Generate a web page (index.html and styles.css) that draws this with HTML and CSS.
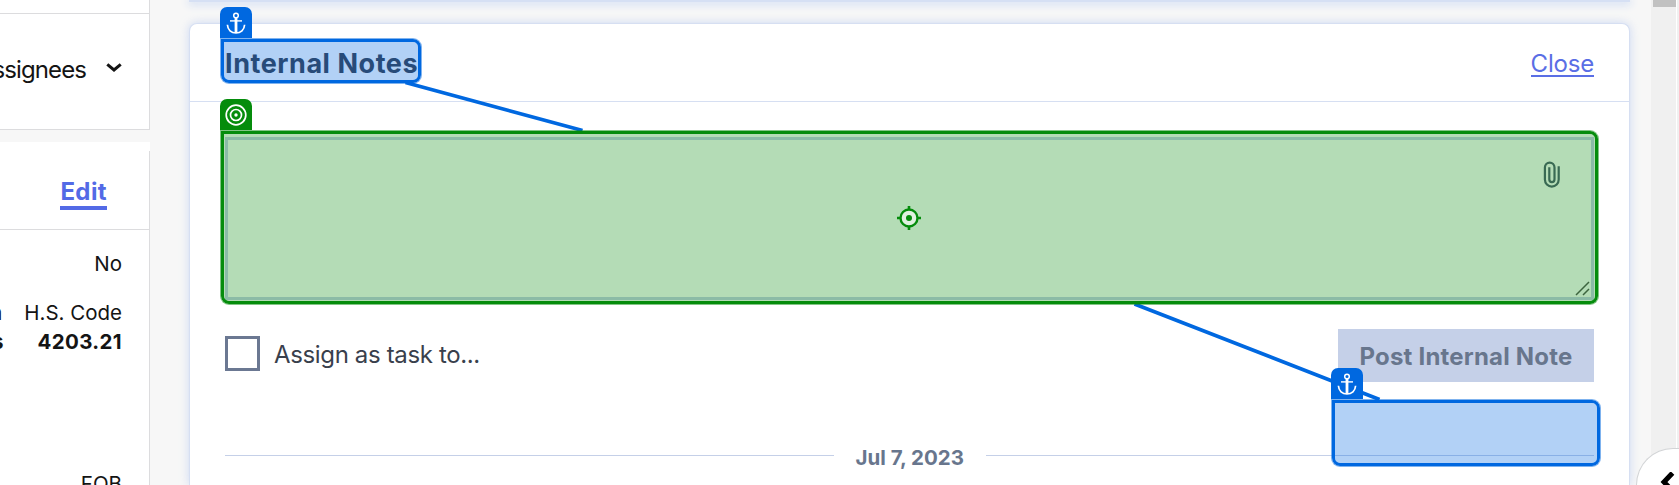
FILE: index.html
```
<!DOCTYPE html>
<html lang="en">
<head>
<meta charset="utf-8">
<title>Internal Notes</title>
<link rel="stylesheet" href="styles.css">
</head>
<body>
<svg class="defs" width="0" height="0">
  <symbol id="anchor" viewBox="0 0 20 22">
    <g fill="none" stroke="#fff">
      <circle cx="10" cy="3.5" r="2.3" stroke-width="1.5"/>
      <path d="M10 5.8V21" stroke-width="2.8"/>
      <path d="M4 8.9H16" stroke-width="1.4"/>
      <path d="M1.4 12.8C1.6 17.8 5.4 21 10 21S18.400 17.800 18.600 12.800" stroke-width="1.700"/>
    </g>
  </symbol>
</svg>
<div class="app">
  <aside class="sidebar">
    <section class="filters">
      <span class="assignees">Assignees</span>
      <svg class="chevron" width="16" height="10" viewBox="0 0 16 10"><path d="M1.300 1.300L8 7L14.700 1.300" fill="none" stroke="#141414" stroke-width="3"/></svg>
    </section>
    <section class="details">
      <header class="details-head"><a class="edit">Edit</a></header>
      <div class="row no"><span>No</span></div>
      <div class="row code"><span class="cut">Origin</span><span>H.S. Code</span></div>
      <div class="row value"><span class="cut">States</span><span class="number">4203.21</span></div>
      <div class="row fob"><span>FOB</span></div>
    </section>
  </aside>
  <main class="main">
    <div class="previous"></div>
    <section class="notes">
      <header class="notes-head"><h2>Internal Notes</h2><a class="close">Close</a></header>
      <div class="notes-body">
        <div class="textarea">
          <svg class="clip" width="18" height="28" viewBox="0 0 18 28"><path d="M15.700 5.300V18.500A6.900 7.200 0 0 1 1.900 18.500V6.500A4.800 4.900 0 0 1 11.500 6.500V18.300A2.500 2.800 0 0 1 6.300 18.300V6.200" fill="none" stroke="#4f5c72" stroke-width="2.200"/></svg>
          <svg class="grip" width="15" height="15" viewBox="0 0 15 15"><path d="M1 14L14 1M8 14L14 8" stroke="#555" stroke-width="1.500"/></svg>
        </div>
        <div class="actions">
          <span class="checkbox"></span><span class="task">Assign as task to...</span>
          <span class="post"><span>Post Internal Note</span></span>
        </div>
        <div class="divider"><i></i><span>Jul 7, 2023</span><i></i></div>
      </div>
    </section>
  </main>
  <div class="scrollbar"><div class="thumb"></div></div>
  <div class="edge"></div>
</div>
<svg class="links" width="1679" height="485"><path d="M405.500 82.500L582.500 130.500M1134.500 304L1379.500 399.500" stroke="#0068e0" stroke-width="3.700"/></svg>
<div class="mark blue title-mark"><span class="tab"><svg width="20" height="22"><use href="#anchor"/></svg></span></div>
<div class="mark green area-mark">
  <span class="tab"><svg width="22" height="22" viewBox="0 0 22 22"><g fill="none" stroke="#fff" stroke-width="1.700"><circle cx="11" cy="11" r="9.800"/><circle cx="11" cy="11" r="5.500"/></g><circle cx="11" cy="11" r="1.700" fill="#fff"/></svg></span>
  <svg class="crosshair" width="24" height="24" viewBox="0 0 24 24"><circle cx="12" cy="12" r="8.500" fill="#e0f1e0" stroke="#058c0c" stroke-width="2.400"/><circle cx="12" cy="12" r="3" fill="#058c0c"/><path d="M12 0V4M12 20V24M0 12H4M20 12H24" stroke="#058c0c" stroke-width="2.600"/></svg>
</div>
<div class="mark blue empty-mark"><span class="tab"><svg width="20" height="22"><use href="#anchor"/></svg></span></div>
<div class="bubble"><svg width="16" height="22" viewBox="0 0 16 22"><path d="M13.500 1L5 10L13.500 19" fill="none" stroke="#000" stroke-width="5"/></svg></div>
</body>
</html>
```
FILE: styles.css
```
* { box-sizing: border-box; }
html { overflow: hidden; }
body { margin: 0; width: 1679px; height: 485px; overflow: hidden; position: relative; background: #f7f7f7; font-family: Inter, "Liberation Sans", sans-serif; color: #141414; }
.defs { position: absolute; }
.app { display: flex; height: 485px; overflow: hidden; }
.sidebar { width: 150px; flex: none; display: flex; flex-direction: column; gap: 12px; overflow: hidden; }
.filters { height: 130px; flex: none; padding: 13px 27px 0 0; background: linear-gradient(#dcdcde, #dcdcde) 0 13px / 100% 1px no-repeat #fff; border: solid #dcdcde; border-width: 0 1px 1px 0; display: flex; align-items: center; justify-content: flex-end; gap: 20px; }
.assignees { font-size: 24px; line-height: 30px; letter-spacing: -.9px; margin-top: -2px; }
.chevron { flex: none; margin-top: -7px; }
.details { flex: none; height: 343px; overflow: hidden; background: linear-gradient(#dcdcde, #dcdcde) 100% 9px / 1px 100% no-repeat #fff; }
.details-head { height: 88px; border-bottom: 1px solid #dcdcde; padding: 34px 43px 0 0; display: flex; justify-content: flex-end; align-items: flex-start; }
.edit { color: #536ae6; font-size: 24px; font-weight: 700; line-height: 30px; height: 34px; padding-top: 1px; border-bottom: 4px solid #536ae6; letter-spacing: .4px; }
.row { display: flex; justify-content: flex-end; padding-right: 28px; font-size: 20.500px; line-height: 29px; white-space: nowrap; gap: 22px; }
.no { padding-top: 19px; }
.code { padding-top: 20px; }
.value { font-weight: 700; gap: 34px; }
.number { letter-spacing: .35px; }
.fob { padding-top: 113px; height: 143px; }
.main { width: 1501px; flex: none; padding-left: 39px; padding-right: 21px; display: flex; flex-direction: column; gap: 21px; }
.previous { height: 2px; flex: none; background: #d6e0f4; box-shadow: 0 1px 8px 1px #c0d2f2; }
.notes { flex: none; height: 462px; overflow: hidden; background: #fff; border: 1px solid #d6dff2; border-bottom: 0; border-radius: 8px 8px 0 0; box-shadow: 0 0 10px rgba(180, 200, 240, .65); }
.notes-head { height: 78px; border-bottom: 1px solid #d6dff2; display: flex; justify-content: space-between; align-items: center; padding: 2px 35px 0 35px; }
h2 { margin: 0; font-size: 27px; line-height: 36px; font-weight: 700; color: #39404c; letter-spacing: .55px; }
.close { color: #5a6ee5; font-size: 24px; line-height: 25px; height: 26px; border-bottom: 2px solid #5a6ee5; letter-spacing: -.2px; margin-top: 1px; }
.notes-body { padding: 35px 35px 0; }
.textarea { height: 163px; border: 3px solid #c5d0e8; display: flex; flex-direction: column; justify-content: space-between; align-items: flex-end; padding: 21px 1px 1px; }
.clip { margin-right: 29px; }
.actions { height: 53px; margin-top: 29px; display: flex; align-items: center; }
.checkbox { width: 35px; height: 35px; border: 3px solid #6b7892; margin-top: -4px; }
.task { margin: -2px 0 0 14px; font-size: 24px; line-height: 30px; color: #39404c; letter-spacing: -.36px; }
.post { margin-left: auto; width: 256px; height: 53px; padding-top: 2px; background: #c5d0e8; color: #68768d; display: flex; align-items: center; justify-content: center; font-size: 24px; font-weight: 700; letter-spacing: .2px; white-space: nowrap; }
.divider { margin-top: 61px; height: 30px; display: flex; align-items: center; gap: 22px; color: #68768d; font-weight: 700; font-size: 20.500px; line-height: 30px; white-space: nowrap; }
.divider span { width: 108px; }
.divider i { height: 1px; flex: 1; background: #c5d0e8; align-self: flex-start; margin-top: 12px; }
.scrollbar { width: 25px; flex: none; background: #f0f0f0; padding-left: 2px; }
.thumb { height: 7px; background: #c1c1c1; }
.edge { width: 3px; flex: none; background: #f0f0f0; border-left: 1px solid #fff; }
.links { position: absolute; left: 0; top: 0; }
.mark { position: absolute; border: 3px solid; border-radius: 0 8px 8px 8px; }
.blue { border-color: #0068e0; background: rgba(0, 104, 224, .3); background-clip: padding-box; box-shadow: 0 0 0 1px rgba(0, 104, 224, .5); }
.green { border-color: #058c0c; background: rgba(5, 140, 12, .3); background-clip: padding-box; box-shadow: 0 0 0 1px rgba(5, 140, 12, .5); }
.title-mark { left: 221px; top: 39px; width: 200px; height: 44px; }
.area-mark { left: 221px; top: 131px; width: 1377px; height: 173px; }
.empty-mark { left: 1332px; top: 400px; width: 268px; height: 66px; }
.tab { position: absolute; left: -4px; top: -35px; width: 32px; height: 31px; border-radius: 7px 7px 0 0; display: flex; justify-content: center; padding-top: 5px; }
.blue .tab { background: #0068e0; }
.green .tab { background: #058c0c; }
.crosshair { position: absolute; left: 673px; top: 72px; }
.bubble { position: absolute; left: 1636px; top: 448px; width: 43px; height: 37px; overflow: hidden; border-radius: 37px 0 0 0; border: solid #d2d4d6; border-width: 1px 0 0 1px; background: #fff; padding: 23px 0 0 22px; }
```
